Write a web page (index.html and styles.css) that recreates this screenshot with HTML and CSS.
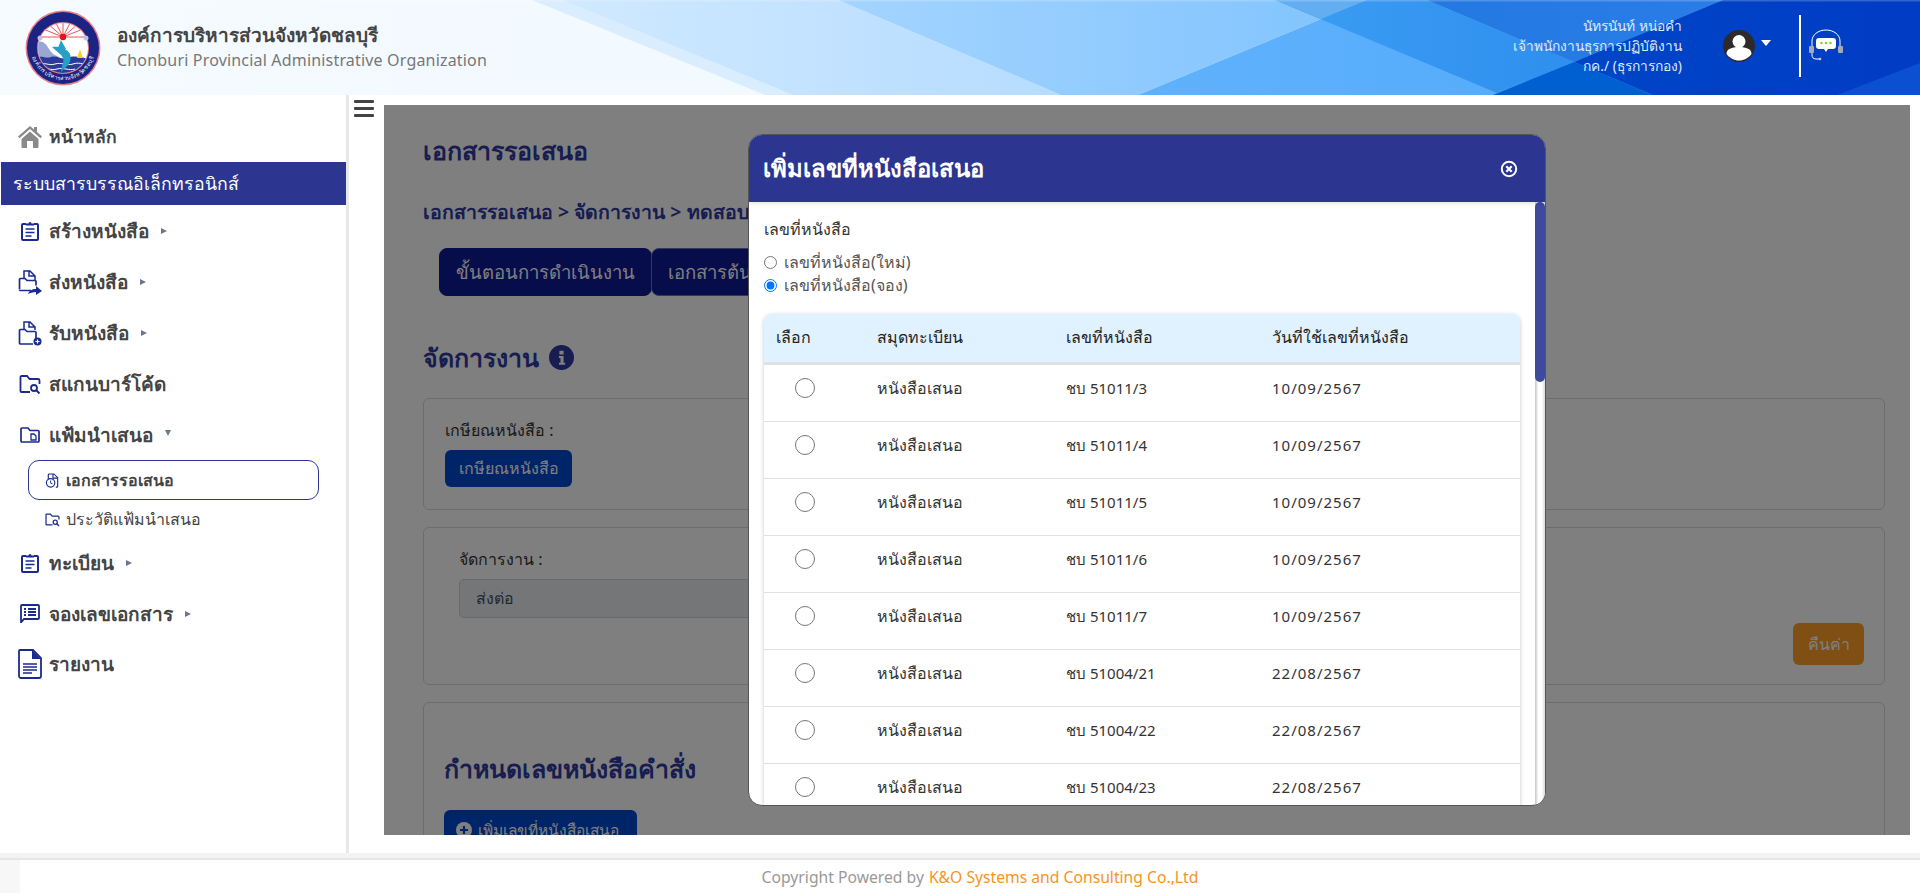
FILE: index.html
```html
<!DOCTYPE html>
<html lang="th">
<head>
<meta charset="utf-8">
<title>องค์การบริหารส่วนจังหวัดชลบุรี</title>
<link rel="stylesheet" href="styles.css">
</head>
<body>
<svg class="defs" width="0" height="0" aria-hidden="true">
  <defs>
    <symbol id="i-clip" viewBox="0 0 18 20"><path d="M5 3H2a1 1 0 0 0-1 1v14a1 1 0 0 0 1 1h14a1 1 0 0 0 1-1V4a1 1 0 0 0-1-1h-3" fill="none" stroke="currentColor" stroke-width="2"/><path d="M5 4.500V2.500h2.500a1.500 1.500 0 0 1 3 0H13v2z" fill="currentColor"/><path d="M4.500 8h9M4.500 11.500h9M4.500 15h6" stroke="currentColor" stroke-width="1.700"/></symbol>
    <symbol id="i-send" viewBox="0 0 24 26"><path d="M6 9V2h6l5 5v4M6 2h5v5h6" fill="none" stroke="currentColor" stroke-width="1.500"/><path d="M1.500 20V10.500a1 1 0 0 1 1-1H7l2 2h8a1 1 0 0 1 1 1v4M13 21.500H2.500a1 1 0 0 1-1-1" fill="none" stroke="currentColor" stroke-width="1.700"/><path d="M10 25c1-3 4-5 8-5v-3l6 5-6 4v-3c-3 0-6 1-8 2z" fill="currentColor"/></symbol>
    <symbol id="i-recv" viewBox="0 0 24 26"><path d="M6 9V2h6l5 5v3M6 2h5v5h6" fill="none" stroke="currentColor" stroke-width="1.500"/><path d="M1.500 23V10.500a1 1 0 0 1 1-1H7l2 2h8a1 1 0 0 1 1 1v6M15 24H2.500a1 1 0 0 1-1-1" fill="none" stroke="currentColor" stroke-width="1.700"/><circle cx="19.500" cy="21.500" r="4" fill="currentColor"/><path d="M19.500 19.500v4M17.500 21.500h4" stroke="#fff" stroke-width="1.200"/></symbol>
    <symbol id="i-scan" viewBox="0 0 22 20"><path d="M11 18H2.500a1 1 0 0 1-1-1V3a1 1 0 0 1 1-1H8l2.500 3H19a1.500 1.500 0 0 1 1.500 1.500V10" fill="none" stroke="currentColor" stroke-width="1.800"/><circle cx="15" cy="14" r="3" fill="none" stroke="currentColor" stroke-width="1.800"/><path d="M17 16l3.500 3.500" stroke="currentColor" stroke-width="2"/></symbol>
    <symbol id="i-fold" viewBox="0 0 20 16"><path d="M1 14V2a1 1 0 0 1 1-1h6l2 2.500h8a1 1 0 0 1 1 1V14a1 1 0 0 1-1 1H2a1 1 0 0 1-1-1z" fill="none" stroke="currentColor" stroke-width="1.700"/><path d="M11 7h3l2 2v4h-5z" fill="none" stroke="currentColor" stroke-width="1.300"/></symbol>
    <symbol id="i-list" viewBox="0 0 20 19"><path d="M1 16V2a1 1 0 0 1 1-1h16a1 1 0 0 1 1 1v12a1 1 0 0 1-1 1H4l-3 3.500z" fill="none" stroke="currentColor" stroke-width="1.800"/><path d="M4 5h2M4 8h2M4 11h2M8 5h8M8 8h8M8 11h8" stroke="currentColor" stroke-width="1.800"/></symbol>
    <symbol id="i-doc" viewBox="0 0 24 30"><path d="M1 27V2a1 1 0 0 1 1-1h13l8 8v18a2 2 0 0 1-2 2H3a2 2 0 0 1-2-2z" fill="none" stroke="currentColor" stroke-width="1.800"/><path d="M14 1l9 9h-9z" fill="currentColor"/><path d="M5 15h14M5 18h14M5 21h14M5 24h9" stroke="currentColor" stroke-width="1.500"/></symbol>
    <symbol id="i-sdoc" viewBox="0 0 15 16"><path d="M3 7V2a1 1 0 0 1 1-1h5l4 4v9a1 1 0 0 1-1 1h-1" fill="none" stroke="currentColor" stroke-width="1.200"/><path d="M8 1v4.500h5" fill="none" stroke="currentColor" stroke-width="1.200"/><circle cx="5.500" cy="10.500" r="4.500" fill="#fff" stroke="currentColor" stroke-width="1.200"/><path d="M5.500 8v2.800l2 .8" fill="none" stroke="currentColor" stroke-width="1"/></symbol>
  </defs>
</svg>

<header class="topbar">
  <svg class="topbar-bg" viewBox="0 0 1920 95" preserveAspectRatio="none" aria-hidden="true">
    <defs>
      <linearGradient id="g1"><stop offset="0" stop-color="#f5fbff"/><stop offset=".6" stop-color="#f0f8ff"/><stop offset="1" stop-color="#ddeffe"/></linearGradient>
      <linearGradient id="g2"><stop offset="0" stop-color="#d0e9ff"/><stop offset="1" stop-color="#b5dcff"/></linearGradient>
      <linearGradient id="g3"><stop offset="0" stop-color="#a4d4ff"/><stop offset="1" stop-color="#80c3fe"/></linearGradient>
      <linearGradient id="g4"><stop offset="0" stop-color="#60b1fb"/><stop offset="1" stop-color="#4aa8fb"/></linearGradient>
      <linearGradient id="g5"><stop offset="0" stop-color="#3c9df4"/><stop offset="1" stop-color="#2f8fee"/></linearGradient>
      <linearGradient id="g6"><stop offset="0" stop-color="#2378e2"/><stop offset="1" stop-color="#2a7de6"/></linearGradient>
      <linearGradient id="g7"><stop offset="0" stop-color="#0045c8"/><stop offset="1" stop-color="#003cc4"/></linearGradient>
    </defs>
    <rect width="1920" height="95" fill="url(#g1)"/>
    <polygon points="532,0 562,0 793,95 765,95" fill="#d9edff"/>
    <polygon points="562,0 838,0 1061,95 793,95" fill="url(#g2)"/>
    <polygon points="838,0 1367,0 1138,95 1061,95" fill="url(#g3)"/>
    <polygon points="1367,0 1920,0 1920,95 1138,95" fill="url(#g4)"/>
    <polygon points="1275,0 1427,0 1574,62 1497,93" fill="url(#g5)"/>
    <polygon points="1275,0 1367,0 1321,19" fill="#62aef1"/>
    <polygon points="1427,0 1723,0 1574,62" fill="url(#g6)"/>
    <polygon points="1574,62 1653,95 1493,95" fill="#0060d2"/>
    <polygon points="1723,0 1920,0 1920,95 1653,95 1574,62" fill="url(#g7)"/>
    <polygon points="1920,63 1837,95 1920,95" fill="#0a50d0"/>
    <rect width="1920" height="1.500" fill="#fff" opacity=".2"/>
  </svg>
  <div class="brand">
    <svg class="logo" viewBox="0 0 76 76" role="img" aria-label="ตราองค์การบริหารส่วนจังหวัดชลบุรี">
      <defs>
        <path id="seal-arc" d="M8 38a30 30 0 0 0 60 0"/>
        <clipPath id="seal-in"><circle cx="38" cy="38" r="25"/></clipPath>
      </defs>
      <circle cx="38" cy="38" r="37.500" fill="#e8808a"/>
      <circle cx="38" cy="38" r="36" fill="#1b2383"/>
      <circle cx="38" cy="38" r="26" fill="#e8808a"/>
      <circle cx="38" cy="38" r="25" fill="#fff"/>
      <g clip-path="url(#seal-in)">
        <g class="rays" stroke="#e8404a" stroke-width=".9">
          <path d="M38 27L16 27M38 27L18 19M38 27L23 14M38 27L30 11M38 27L38 10M38 27L46 11M38 27L53 14M38 27L58 19M38 27L60 27"/>
        </g>
        <circle cx="38" cy="27" r="3.200" fill="#e8101e"/>
        <path d="M12 32c6-2 9 2 12 7s6 6 10 8v20H10z" fill="#9aa6d6"/>
        <path d="M10 48c8-3 10 1 16-1s10 3 16 1 10-2 22 1v18H10z" fill="#2b3b9c"/>
        <path d="M12 54c8-2 12 2 18 0s12 2 18 0 8 0 16 1M14 59c8-2 12 2 18 0s12 2 18 0" fill="none" stroke="#fff" stroke-width="1"/>
        <path d="M27 37C33 36 42 38 45 44C47 50 44 55 40 58L36 62L37 56C39 52 39 48 36 45C33 42 30 40 27 37ZM36 30L41 39L33 38Z" fill="#27a0c6"/>
        <path d="M55 39l3 9h-6z" fill="#f5d327"/>
      </g>
      <circle cx="15" cy="28" r="2.500" fill="#b9c3ea"/><circle cx="61" cy="28" r="2.500" fill="#b9c3ea"/>
      <text class="seal-text"><textPath href="#seal-arc" startOffset="50%">องค์การบริหารส่วนจังหวัดชลบุรี</textPath></text>
    </svg>
    <div class="brand-text">
      <div class="brand-th">องค์การบริหารส่วนจังหวัดชลบุรี</div>
      <div class="brand-en">Chonburi Provincial Administrative Organization</div>
    </div>
  </div>
  <div class="user">
    <div class="user-text">
      <div>นัทรนันท์ หน่อคำ</div>
      <div>เจ้าพนักงานธุรการปฏิบัติงาน</div>
      <div>กค./ (ธุรการกอง)</div>
    </div>
    <svg class="avatar" viewBox="0 0 32 32" aria-hidden="true"><circle cx="16" cy="16" r="16" fill="#2e2a2a"/><circle cx="16" cy="11.500" r="6.500" fill="#fff"/><path d="M3.500 24c0-5 5-7 12.500-7s12.500 2 12.500 7c-3 4-7.500 6.500-12.500 6.500S6.500 28 3.500 24z" fill="#fff"/></svg>
    <span class="user-caret"></span>
    <span class="divider"></span>
    <svg class="headset" viewBox="0 0 34 32" aria-hidden="true"><path d="M3 18v-6C3 6 9 1 17 1s14 5 14 11v6" fill="none" stroke="#fff" stroke-width="1"/><path d="M3 23v3c0 2 1 4 4 4h3" fill="none" stroke="#fff" stroke-width="1"/><circle cx="11" cy="30" r="1.300" fill="#ccc"/><rect x="0" y="17" width="5" height="7" rx="1" fill="#a5a9b0"/><rect x="29" y="17" width="5" height="7" rx="1" fill="#a5a9b0"/><path d="M10 9h14a3 3 0 0 1 3 3v5a3 3 0 0 1-3 3h-5l-2 3-2-3h-5a3 3 0 0 1-3-3v-5a3 3 0 0 1 3-3z" fill="#fff"/><circle cx="12.500" cy="14" r="1.200" fill="#7ad321"/><circle cx="17" cy="14" r="1.200" fill="#7ad321"/><circle cx="21.500" cy="14" r="1.200" fill="#7ad321"/></svg>
  </div>
</header>

<div class="layout">
  <nav class="sidebar">
    <a class="nav-item">
      <span class="nav-icon"><svg class="home" viewBox="0 0 24 23"><path d="M12 1L0 11.500l1.500 1.700L12 4l10.500 9.200 1.500-1.700-5-4.400V2h-3v2.500z" fill="#8a8a8a"/><path d="M3.500 14L12 6.500l8.500 7.500v8a1 1 0 0 1-1 1H15v-7H9v7H4.500a1 1 0 0 1-1-1z" fill="#8a8a8a"/></svg></span><span class="nav-home">หน้าหลัก</span>
    </a>
    <div class="nav-band">ระบบสารบรรณอิเล็กทรอนิกส์</div>
    <a class="nav-item"><span class="nav-icon"><svg class="ic-clip"><use href="#i-clip"/></svg></span>สร้างหนังสือ<span class="caret"></span></a>
    <a class="nav-item"><span class="nav-icon"><svg class="ic-big"><use href="#i-send"/></svg></span>ส่งหนังสือ<span class="caret"></span></a>
    <a class="nav-item"><span class="nav-icon"><svg class="ic-big"><use href="#i-recv"/></svg></span>รับหนังสือ<span class="caret"></span></a>
    <a class="nav-item"><span class="nav-icon"><svg class="ic-scan"><use href="#i-scan"/></svg></span>สแกนบาร์โค้ด</a>
    <a class="nav-item"><span class="nav-icon"><svg class="ic-fold"><use href="#i-fold"/></svg></span>แฟ้มนำเสนอ<span class="caret down"></span></a>
    <a class="sub-item active"><svg class="ic-sub"><use href="#i-sdoc"/></svg>เอกสารรอเสนอ</a>
    <a class="sub-item sub-plain"><svg class="ic-sub"><use href="#i-scan"/></svg>ประวัติแฟ้มนำเสนอ</a>
    <a class="nav-item nav-low"><span class="nav-icon"><svg class="ic-clip"><use href="#i-clip"/></svg></span>ทะเบียน<span class="caret"></span></a>
    <a class="nav-item nav-low"><span class="nav-icon"><svg class="ic-list"><use href="#i-list"/></svg></span>จองเลขเอกสาร<span class="caret"></span></a>
    <a class="nav-item nav-low"><span class="nav-icon"><svg class="ic-doc"><use href="#i-doc"/></svg></span>รายงาน</a>
  </nav>

  <main class="main">
    <button class="burger" aria-label="เมนู"><span></span><span></span><span></span></button>
    <section class="panel">
      <h1 class="page-title">เอกสารรอเสนอ</h1>
      <div class="crumbs">เอกสารรอเสนอ &gt; จัดการงาน &gt; ทดสอบ</div>
      <div class="tabs"><span class="tab">ขั้นตอนการดำเนินงาน</span><span class="tab">เอกสารต้นเรื่อง</span></div>
      <h2 class="section-title">จัดการงาน <svg class="info" viewBox="0 0 24 24"><circle cx="12" cy="12" r="12" fill="#2f3aa0"/><path d="M10 5.500h4v3.500h-4zM9.500 10.500H14V17h1.500v2h-6v-2H11v-4.500H9.500z" fill="#fff"/></svg></h2>
      <div class="card card-a">
        <label class="field-label">เกษียณหนังสือ :</label>
        <button class="btn btn-blue">เกษียณหนังสือ</button>
      </div>
      <div class="card card-b">
        <label class="field-label">จัดการงาน :</label>
        <div class="select">ส่งต่อ</div>
        <div class="actions"><button class="btn btn-orange">คืนค่า</button></div>
      </div>
      <div class="card card-c">
        <h3 class="card-title">กำหนดเลขหนังสือคำสั่ง</h3>
        <button class="btn btn-blue btn-add"><svg class="plus" viewBox="0 0 16 16"><circle cx="8" cy="8" r="8" fill="#fff"/><path d="M8 4v8M4 8h8" stroke="#0048d0" stroke-width="2.200"/></svg>เพิ่มเลขที่หนังสือเสนอ</button>
      </div>

      <div class="backdrop">
        <div class="modal">
          <div class="modal-head">
            <div class="modal-title">เพิ่มเลขที่หนังสือเสนอ</div>
            <svg class="close" viewBox="0 0 18 18" aria-label="ปิด"><circle cx="9" cy="9" r="7.200" fill="none" stroke="#fff" stroke-width="2"/><path d="M6.300 6.300l5.400 5.400M11.700 6.300l-5.400 5.400" stroke="#fff" stroke-width="2.200"/></svg>
          </div>
          <div class="modal-body">
            <div class="label-main">เลขที่หนังสือ</div>
            <div class="choices">
              <label class="choice"><input type="radio" name="kind">เลขที่หนังสือ(ใหม่)</label>
              <label class="choice"><input type="radio" name="kind" checked>เลขที่หนังสือ(จอง)</label>
            </div>
            <div class="table-wrap">
              <table class="table">
                <colgroup><col class="c1"><col class="c2"><col class="c3"><col></colgroup>
                <thead><tr><th>เลือก</th><th>สมุดทะเบียน</th><th>เลขที่หนังสือ</th><th>วันที่ใช้เลขที่หนังสือ</th></tr></thead>
                <tbody>
                  <tr><td class="pick"><input type="radio" name="no"></td><td class="book">หนังสือเสนอ</td><td>ชบ 51011/3</td><td class="date">10/09/2567</td></tr>
                  <tr><td class="pick"><input type="radio" name="no"></td><td class="book">หนังสือเสนอ</td><td>ชบ 51011/4</td><td class="date">10/09/2567</td></tr>
                  <tr><td class="pick"><input type="radio" name="no"></td><td class="book">หนังสือเสนอ</td><td>ชบ 51011/5</td><td class="date">10/09/2567</td></tr>
                  <tr><td class="pick"><input type="radio" name="no"></td><td class="book">หนังสือเสนอ</td><td>ชบ 51011/6</td><td class="date">10/09/2567</td></tr>
                  <tr><td class="pick"><input type="radio" name="no"></td><td class="book">หนังสือเสนอ</td><td>ชบ 51011/7</td><td class="date">10/09/2567</td></tr>
                  <tr><td class="pick"><input type="radio" name="no"></td><td class="book">หนังสือเสนอ</td><td>ชบ 51004/21</td><td class="date">22/08/2567</td></tr>
                  <tr><td class="pick"><input type="radio" name="no"></td><td class="book">หนังสือเสนอ</td><td>ชบ 51004/22</td><td class="date">22/08/2567</td></tr>
                  <tr><td class="pick"><input type="radio" name="no"></td><td class="book">หนังสือเสนอ</td><td>ชบ 51004/23</td><td class="date">22/08/2567</td></tr>
                </tbody>
              </table>
            </div>
            <div class="scroll-track"><div class="scroll-thumb"></div></div>
          </div>
        </div>
      </div>
    </section>
  </main>
</div>

<div class="foot-strip"></div>
<footer class="footer">Copyright Powered by <span class="brand-link">K&amp;O Systems and Consulting Co.,Ltd</span></footer>
</body>
</html>
```
FILE: styles.css
```css
* { box-sizing: border-box; }
html, body { height: 100%; }
body {
  margin: 0;
  height: 893px;
  overflow: hidden;
  display: flex;
  flex-direction: column;
  background: #fff;
  color: #333;
  font-family: "Noto Sans", "Open Sans", sans-serif;
  font-size: 15px;
}
.defs { position: absolute; }
h1, h2, h3 { margin: 0; }
button { font-family: inherit; border: 0; }

/* top bar */
.topbar {
  position: relative;
  flex: 0 0 95px;
  display: flex;
  align-items: center;
  overflow: hidden;
}
.topbar-bg { position: absolute; inset: 0; width: 100%; height: 100%; }
.brand { position: relative; display: flex; align-items: center; padding-left: 25px; }
.logo { width: 76px; height: 76px; flex: none; overflow: visible; }
.seal-text { font-size: 5.600px; fill: #fff; text-anchor: middle; dominant-baseline: middle; }
.brand-text { margin: -2px 0 0 16px; }
.brand-th { font-size: 19px; line-height: 26px; font-weight: 600; color: #444; }
.brand-en { font-size: 16px; line-height: 24px; color: #777; letter-spacing: .18px; }
.user { position: relative; margin-left: auto; margin-top: -3px; display: flex; align-items: center; padding-right: 77px; }
.user-text { text-align: right; color: #dfe9f8; font-size: 13.800px; line-height: 20px; }
.avatar { width: 32px; height: 32px; margin-left: 41px; }
.user-caret { width: 0; height: 0; margin: -6px 0 0 6px; border: 5px solid transparent; border-top: 6px solid #fff; border-bottom: 0; }
.divider { width: 2px; height: 62px; margin-left: 28px; background: #fff; }
.headset { width: 34px; height: 32px; margin: 0 0 2px 8px; }

/* layout */
.layout { flex: 1; display: flex; min-height: 0; }
.sidebar {
  flex: 0 0 349px;
  padding-top: 16px;
  border-right: 3px solid #e8e8e8;
}
.nav-item {
  height: 51px;
  display: flex;
  align-items: center;
  padding-left: 18px;
  font-size: 19px;
  font-weight: 600;
  color: #444;
}
.nav-item.nav-low { height: 50.500px; }
.nav-home { font-size: 17.500px; }
.nav-icon { flex: 0 0 24px; display: flex; align-items: center; justify-content: center; margin-right: 7px; color: #1b2a8f; }
.home { width: 24px; height: 23px; }
.ic-clip { width: 18px; height: 20px; }
.ic-big { width: 24px; height: 26px; }
.ic-scan { width: 22px; height: 20px; }
.ic-fold { width: 20px; height: 16px; }
.ic-list { width: 20px; height: 19px; }
.ic-doc { width: 24px; height: 30px; }
.nav-band {
  height: 43px;
  margin: 0 0 0 1px;
  padding-left: 12px;
  display: flex;
  align-items: center;
  background: #2c3691;
  color: #fff;
  font-size: 17.700px;
  font-weight: 500;
}
.caret { margin-left: 12px; width: 0; height: 0; border-left: 6px solid #6b7590; border-top: 3.500px solid transparent; border-bottom: 3.500px solid transparent; }
.caret.down { border-top: 6px solid #6b7590; border-left: 3.500px solid transparent; border-right: 3.500px solid transparent; border-bottom: 0; margin-top: -4px; }
.sub-item {
  height: 40px;
  margin: 0 27px 0 28px;
  padding-left: 16px;
  display: flex;
  align-items: center;
  font-size: 16px;
  color: #444;
  border: 1.500px solid transparent;
  border-radius: 11px;
}
.sub-item.sub-plain { height: 38px; }
.sub-item.active { border-color: #2c3691; font-weight: 600; }
.ic-sub { width: 15px; height: 15px; margin-right: 6px; color: #1b2a8f; }

/* main */
.main { flex: 1; min-width: 0; display: flex; align-items: flex-start; padding: 5px 10px 18px 5px; }
.burger { flex: 0 0 20px; height: 17px; margin-right: 10px; padding: 0; background: none; display: flex; flex-direction: column; justify-content: space-between; }
.burger span { display: block; height: 3px; background: #444; border-radius: 1px; }
.panel { position: relative; flex: 1; align-self: stretch; margin-top: 5px; padding: 28px 25px 0 39px; overflow: hidden; background: #fff; }
.page-title { font-size: 25px; line-height: 34px; font-weight: 600; color: #2f3aa0; }
.crumbs { margin-top: 32px; font-size: 19.500px; line-height: 26px; font-weight: 600; color: #2f3aa0; }
.tabs { display: flex; margin: 23px 0 0 16px; }
.tab { height: 48px; padding: 0 16px; display: flex; align-items: center; font-size: 18.500px; color: #fff; background: #0e1a96; border-radius: 8px; border: 1px solid #0e1a96; }
.tab + .tab { margin-left: -1px; border-color: #6b72b0; width: 280px; }
.section-title { display: flex; align-items: center; gap: 10px; margin-top: 44px; font-size: 25px; line-height: 34px; font-weight: 600; color: #2f3aa0; }
.info { width: 25px; height: 25px; }
.card { border: 1px solid #d9d9d9; border-radius: 6px; margin-top: 17px; }
.card-a { margin-top: 24px; height: 112px; padding: 19px 21px; }
.card-b { height: 158px; padding: 19px 20px 20px 35px; }
.card-c { padding: 45px 21px 0 20px; }
.field-label { display: block; font-size: 16px; line-height: 24px; color: #333; }
.btn { display: flex; align-items: center; justify-content: center; color: #fff; border-radius: 6px; font-size: 16px; }
.btn-blue { width: 127px; height: 37px; margin-top: 8px; background: #0048d0; }
.btn-orange { width: 71px; height: 42px; background: #ff9e28; border-radius: 6px; }
.select { width: 760px; height: 39px; margin-top: 8px; padding-left: 16px; display: flex; align-items: center; font-size: 16px; color: #495057; background: #e9ecef; border: 1px solid #ced4da; border-radius: 5px; }
.actions { display: flex; justify-content: flex-end; margin-top: 5px; }
.card-title { font-size: 25px; line-height: 40px; font-weight: 600; color: #2f3aa0; }
.btn-add { width: 193px; height: 40px; margin-top: 22px; gap: 6px; justify-content: flex-start; padding-left: 12px; font-size: 15.500px; }
.plus { width: 16px; height: 16px; flex: none; }

/* modal */
.backdrop { position: absolute; inset: 0; display: flex; justify-content: center; align-items: flex-start; padding-top: 29px; background: rgba(0, 0, 0, .5); }
.modal { width: 798px; height: 672px; display: flex; flex-direction: column; background: #fff; border: 1px solid #555; border-radius: 14px; overflow: hidden; }
.modal-head { flex: 0 0 67px; display: flex; align-items: center; justify-content: space-between; padding: 0 27px 0 14px; background: #2c3691; box-shadow: 0 2px 4px rgba(0,0,0,.1); z-index: 1; }
.modal-title { font-size: 23.800px; font-weight: 600; color: #fff; }
.close { width: 18px; height: 18px; }
.modal-body { position: relative; flex: 1; min-height: 0; padding: 15px 25px 0 15px; overflow: hidden; }
.label-main { font-size: 16px; line-height: 24px; color: #333; }
.choices { margin-top: 10px; }
.choice { display: flex; align-items: center; height: 23px; font-size: 16px; color: #555; }
.choice input { width: 13px; height: 13px; margin: 0 7px 0 0; }
.table-wrap { margin-top: 17px; border-radius: 8px; box-shadow: 0 1px 4px rgba(0,0,0,.22); overflow: hidden; }
.table { width: 756px; border-collapse: collapse; table-layout: fixed; font-size: 15px; color: #333; }
.c1 { width: 101px; } .c2 { width: 189px; } .c3 { width: 206px; }
.table th { height: 49px; padding: 0 12px; background: #e0f2ff; border-bottom: 3px solid #dee2e6; text-align: left; font-size: 16px; font-weight: 500; color: #222; }
.table td { height: 57px; padding: 10px 12px 20px; line-height: 26px; border-bottom: 1px solid #dee2e6; vertical-align: top; }
.table .book { font-size: 16px; font-weight: 500; }
.table .date { letter-spacing: 1px; }
.table .pick { padding-top: 13px; padding-left: 31px; line-height: 0; }
.pick input { width: 20px; height: 20px; margin: 0; }
.scroll-track { position: absolute; top: 0; right: 0; bottom: 0; width: 10px; background: linear-gradient(90deg, #c6c6c6, #fff 35%, #fff 65%, #dcdcdc); }
.scroll-thumb { height: 180px; background: #3e4a9b; border-radius: 5px; }

/* footer */
.foot-strip { flex: 0 0 7px; background: #f3f3f3; border-bottom: 2px solid #e6e6e6; }
.footer { flex: 0 0 33px; margin-left: 20px; padding-left: 20px; display: flex; align-items: center; justify-content: center; gap: 5px; background: #fff; color: #999; font-size: 15.700px; box-shadow: -20px 0 0 #f7f7f7; }
.brand-link { color: #f7941d; }
```
